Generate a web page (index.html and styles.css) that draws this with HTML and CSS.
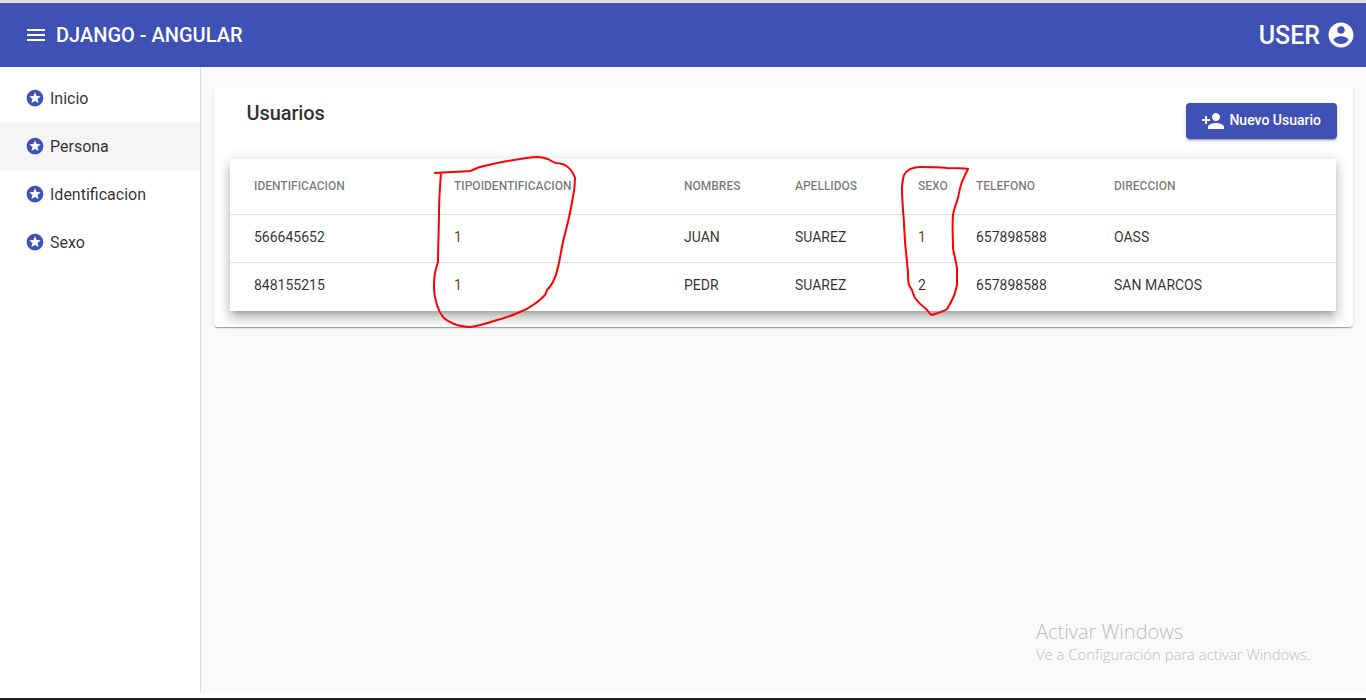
FILE: index.html
```html
<!DOCTYPE html>
<html lang="es">
<head>
    <meta charset="UTF-8">
    <meta name="viewport" content="width=device-width, initial-scale=1.0">
    <title>Django - Angular</title>
    <link rel="stylesheet" href="styles.css">
</head>
<body>
    <div class="top-strip"></div>
    <header class="toolbar">
        <div class="toolbar-left">
            <svg class="icon-menu" viewBox="0 0 24 24"><path d="M3 18h18v-2H3v2zm0-5h18v-2H3v2zm0-7v2h18V6H3z"/></svg>
            <span class="brand">DJANGO - ANGULAR</span>
        </div>
        <div class="toolbar-right">
            <span class="user-name">USER</span>
            <svg class="icon-user" viewBox="0 0 24 24"><path d="M12 2C6.48 2 2 6.48 2 12s4.48 10 10 10 10-4.48 10-10S17.52 2 12 2zm0 3c1.66 0 3 1.34 3 3s-1.34 3-3 3-3-1.34-3-3 1.34-3 3-3zm0 14.2c-2.5 0-4.71-1.28-6-3.22.03-1.99 4-3.08 6-3.08 1.99 0 5.97 1.09 6 3.08-1.29 1.94-3.5 3.22-6 3.22z"/></svg>
        </div>
    </header>

    <div class="layout">
        <nav class="sidebar">
            <a class="nav-item">
                <svg class="icon-star" viewBox="0 0 24 24"><path d="M11.99 2C6.47 2 2 6.48 2 12s4.47 10 9.99 10C17.52 22 22 17.52 22 12S17.52 2 11.99 2zm4.24 16L12 15.45 7.77 18l1.12-4.81-3.73-3.23 4.92-.42L12 5l1.92 4.53 4.92.42-3.73 3.23L16.23 18z"/></svg>
                Inicio
            </a>
            <a class="nav-item active">
                <svg class="icon-star" viewBox="0 0 24 24"><path d="M11.99 2C6.47 2 2 6.48 2 12s4.47 10 9.99 10C17.52 22 22 17.52 22 12S17.52 2 11.99 2zm4.24 16L12 15.45 7.77 18l1.12-4.81-3.73-3.23 4.92-.42L12 5l1.92 4.53 4.92.42-3.73 3.23L16.23 18z"/></svg>
                Persona
            </a>
            <a class="nav-item">
                <svg class="icon-star" viewBox="0 0 24 24"><path d="M11.99 2C6.47 2 2 6.48 2 12s4.47 10 9.99 10C17.52 22 22 17.52 22 12S17.52 2 11.99 2zm4.24 16L12 15.45 7.77 18l1.12-4.81-3.73-3.23 4.92-.42L12 5l1.92 4.53 4.92.42-3.73 3.23L16.23 18z"/></svg>
                Identificacion
            </a>
            <a class="nav-item">
                <svg class="icon-star" viewBox="0 0 24 24"><path d="M11.99 2C6.47 2 2 6.48 2 12s4.47 10 9.99 10C17.52 22 22 17.52 22 12S17.52 2 11.99 2zm4.24 16L12 15.45 7.77 18l1.12-4.81-3.73-3.23 4.92-.42L12 5l1.92 4.53 4.92.42-3.73 3.23L16.23 18z"/></svg>
                Sexo
            </a>
        </nav>

        <main class="content">
            <section class="card">
                <div class="card-header">
                    <h1 class="card-title">Usuarios</h1>
                    <button class="btn-new" type="button">
                        <svg class="icon-add" viewBox="0 0 24 24"><path d="M15 12c2.21 0 4-1.79 4-4s-1.79-4-4-4-4 1.79-4 4 1.79 4 4 4zm-9-2V7H4v3H1v2h3v3h2v-3h3v-2H6zm9 4c-2.67 0-8 1.34-8 4v2h16v-2c0-2.66-5.33-4-8-4z"/></svg>
                        <span class="btn-label">Nuevo Usuario</span>
                    </button>
                </div>
                <table class="users">
                    <colgroup>
                        <col class="col-id">
                        <col class="col-tipo">
                        <col class="col-nombres">
                        <col class="col-apellidos">
                        <col class="col-sexo">
                        <col class="col-telefono">
                        <col>
                    </colgroup>
                    <thead>
                        <tr>
                            <th>IDENTIFICACION</th>
                            <th>TIPOIDENTIFICACION</th>
                            <th>NOMBRES</th>
                            <th>APELLIDOS</th>
                            <th>SEXO</th>
                            <th>TELEFONO</th>
                            <th>DIRECCION</th>
                        </tr>
                    </thead>
                    <tbody>
                        <tr>
                            <td>566645652</td>
                            <td class="code-one">1</td>
                            <td>JUAN</td>
                            <td>SUAREZ</td>
                            <td class="code-one">1</td>
                            <td>657898588</td>
                            <td>OASS</td>
                        </tr>
                        <tr>
                            <td>848155215</td>
                            <td class="code-one">1</td>
                            <td>PEDR</td>
                            <td>SUAREZ</td>
                            <td>2</td>
                            <td>657898588</td>
                            <td>SAN MARCOS</td>
                        </tr>
                    </tbody>
                </table>
            </section>
        </main>
    </div>
    <div class="bottom-gap"></div>
    <div class="taskbar-edge"></div>

    <!-- marcas a mano sobre la captura -->
    <svg class="scribble" viewBox="0 0 1366 700">
        <path d="M435 173 C448 172 460 172 470 171 C474 170 476 168 480 167 C492 164 506 161 520 159 C528 158 532 157 537 157 C542 157 545 158 548 159 C551 161 553 162 556 163 C560 163 562 164 565 165 C570 168 573 172 575 178 C575 186 574 194 572 202 C570 216 566 229 563 242 C561 251 560 259 558 267 C557 273 555 278 553 282 C551 286 549 288 547 290 C546 292 546 294 545 295 C541 299 538 302 533 305 C529 308 525 310 520 312 C513 315 505 318 497 320 C488 323 479 326 470 327 C465 327 461 326 457 325 C451 323 446 320 443 317 C440 313 438 309 437 305 C435 299 434 294 434 288 C434 282 434 278 435 273 C436 269 437 265 438 262 C438 245 439 228 439 212 C439 199 440 186 441 173"/>
        <path d="M968 169 C961 168 954 168 947 168 C938 167 929 167 920 167 C916 167 913 168 910 169 C907 171 905 173 904 175 C903 179 902 184 902 188 C902 199 903 211 904 222 C904 229 905 236 905 242 C906 252 907 262 908 272 C908 277 908 281 909 285 C910 287 911 288 912 290 C913 293 914 296 915 298 C918 302 921 305 925 308 C928 310 929 314 932 315 C937 313 943 312 947 309 C949 306 951 302 953 298 C955 294 956 289 957 285 C957 279 957 274 957 268 C956 261 954 255 953 248 C953 237 952 226 953 215 C954 209 956 204 958 198 C959 193 960 187 962 182 C964 177 966 173 968 169"/>
    </svg>

    <div class="watermark">
        <div class="watermark-title">Activar Windows</div>
        <div class="watermark-text">Ve a Configuración para activar Windows.</div>
    </div>
</body>
</html>
```

FILE: styles.css
```css
html, body {
    margin: 0;
    padding: 0;
}
body {
    position: relative;
    display: flex;
    flex-direction: column;
    height: 700px;
    overflow: hidden;
    background-color: #fff;
    font-family: Roboto, "Liberation Sans", sans-serif;
    color: rgba(0, 0, 0, 0.82);
}
.top-strip {
    height: 3px;
    background-color: #dcdcdc;
}
.toolbar {
    display: flex;
    justify-content: space-between;
    align-items: center;
    height: 64px;
    padding: 0 10px 0 24px;
    background-color: #3f51b5;
    color: #fff;
}
.toolbar-left, .toolbar-right {
    display: flex;
    align-items: center;
}
.icon-menu {
    width: 24px;
    height: 24px;
    margin-right: 8px;
    fill: #fff;
}
.brand {
    font-size: 20px;
    font-weight: 500;
}
.user-name {
    font-size: 25px;
    font-weight: 500;
    margin-right: 6px;
}
.icon-user {
    width: 30px;
    height: 30px;
    fill: #fff;
}
.layout {
    display: flex;
    height: 626px;
}
.sidebar {
    box-sizing: border-box;
    width: 201px;
    padding-top: 8px;
    background-color: #fff;
    border-right: 1px solid #e0e0e0;
}
.nav-item {
    display: flex;
    align-items: center;
    gap: 5px;
    box-sizing: border-box;
    height: 48px;
    padding: 0 0 2px 25px;
    font-size: 16px;
}
.nav-item.active {
    background-color: #f5f5f5;
}
.icon-star {
    width: 20px;
    height: 20px;
    fill: #3f51b5;
}
.content {
    flex: 1;
    padding: 20px 13px;
    background-color: #fafafa;
}
.card {
    padding: 16px;
    background-color: #fff;
    border-radius: 4px;
    box-shadow: 0 2px 1px -1px rgba(0, 0, 0, 0.2), 0 1px 1px 0 rgba(0, 0, 0, 0.14), 0 1px 3px 0 rgba(0, 0, 0, 0.12);
}
.card-header {
    display: flex;
    justify-content: space-between;
    align-items: flex-start;
    margin-bottom: 20px;
}
.card-title {
    margin: 0 0 0 16.5px;
    font-size: 20px;
    font-weight: 500;
    line-height: 20px;
    letter-spacing: -0.1px;
}
.btn-new {
    display: flex;
    align-items: center;
    gap: 4px;
    height: 36px;
    padding: 0 16px 0 15px;
    border: none;
    border-radius: 4px;
    background-color: #3f51b5;
    color: #fff;
    font-family: inherit;
    font-size: 14px;
    font-weight: 500;
    box-shadow: 0 3px 1px -2px rgba(0, 0, 0, 0.2), 0 2px 2px 0 rgba(0, 0, 0, 0.14), 0 1px 5px 0 rgba(0, 0, 0, 0.12);
}
.btn-label {
    padding-bottom: 2px;
}
.icon-add {
    width: 24px;
    height: 24px;
    fill: #fff;
}
.users {
    width: calc(100% - 1px);
    table-layout: fixed;
    border-collapse: collapse;
    background-color: #fff;
    box-shadow: 0 5px 5px -3px rgba(0, 0, 0, 0.2), 0 8px 10px 1px rgba(0, 0, 0, 0.14), 0 3px 14px 2px rgba(0, 0, 0, 0.12);
}
.col-id { width: 224px; }
.col-tipo { width: 230px; }
.col-nombres { width: 111px; }
.col-apellidos { width: 123px; }
.col-sexo { width: 58px; }
.col-telefono { width: 138px; }
.users th, .users td {
    box-sizing: border-box;
    padding: 0;
    text-align: left;
    border-bottom: 1px solid #e0e0e0;
}
.users th:first-child, .users td:first-child {
    padding-left: 24px;
}
.users th {
    height: 55px;
    padding-bottom: 1px;
    font-size: 12px;
    font-weight: 500;
    color: rgba(0, 0, 0, 0.54);
}
.users td {
    height: 48px;
    padding-bottom: 2px;
    font-size: 14px;
}
.users tbody tr:last-child td {
    height: 49px;
    padding-bottom: 3px;
    border-bottom: none;
}
.users td.code-one {
    color: #8a2f2a;
}
.bottom-gap {
    height: 5px;
    background-color: #fff;
}
.taskbar-edge {
    height: 2px;
    background-color: #222;
}
.scribble {
    position: absolute;
    top: 0;
    left: 0;
    width: 1366px;
    height: 700px;
    pointer-events: none;
}
.scribble path {
    fill: none;
    stroke: #f00;
    stroke-width: 2;
    stroke-linecap: round;
    stroke-linejoin: round;
}
.watermark {
    position: absolute;
    top: 620px;
    left: 1036px;
    font-family: "Open Sans", sans-serif;
    font-weight: 300;
    color: #bcbcbc;
}
.watermark-title {
    font-size: 20px;
    line-height: 24px;
}
.watermark-text {
    font-size: 14.85px;
    line-height: 20px;
}
```
